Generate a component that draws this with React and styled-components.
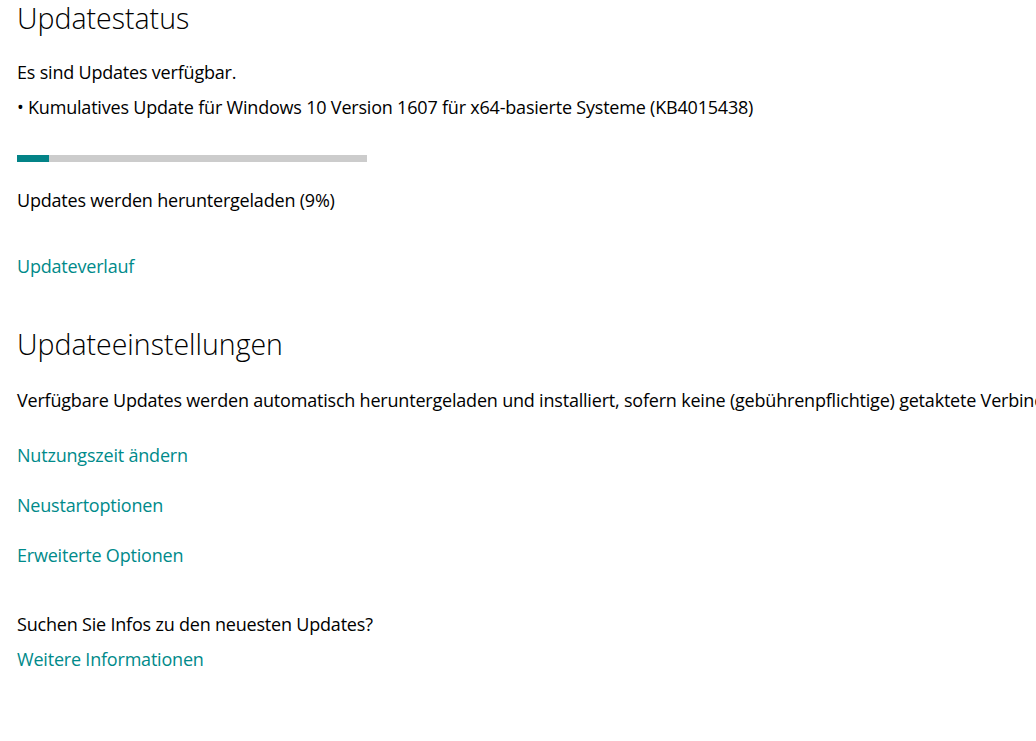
import React from "react";
import styled, { createGlobalStyle } from "styled-components";

const GlobalStyle = createGlobalStyle`
  html, body {
    margin: 0;
    padding: 0;
    background: #ffffff;
  }
  body {
    font-family: "Open Sans", "Noto Sans", sans-serif;
    color: #000000;
    overflow: hidden;
  }
`;

const Page = styled.main`
  width: 1036px;
  height: 741px;
  padding: 0 0 0 17px;
  box-sizing: border-box;
  overflow: hidden;
  white-space: nowrap;
`;

const Section = styled.section`
  display: flex;
  flex-direction: column;
  align-items: flex-start;
  margin-top: ${(p) => p.$top || 0}px;
`;

const Heading = styled.h2`
  font-size: 28.5px;
  font-weight: 300;
  line-height: 36px;
  margin: 0;
`;

const Text = styled.p`
  font-size: 18px;
  line-height: 24px;
  margin: ${(p) => p.$top || 0}px 0 0 0;
  letter-spacing: -0.2px;
`;

const Link = styled.a`
  font-size: 18px;
  line-height: 24px;
  margin-top: ${(p) => p.$top || 0}px;
  color: #008a8a;
  text-decoration: none;
  letter-spacing: -0.2px;
  cursor: pointer;
`;

const Track = styled.div`
  width: 350px;
  height: 7px;
  background: #cccccc;
  margin-top: 36px;
`;

const Fill = styled.div`
  height: 100%;
  background: #038387;
`;

const updateLinks = ["Nutzungszeit ändern", "Neustartoptionen", "Erweiterte Optionen"];

const App = () => {
  const progress = 9;

  return (
    <>
      <GlobalStyle />
      <Page>
        <Section>
          <Heading>Updatestatus</Heading>
          <Text $top={24}>Es sind Updates verfügbar.</Text>
          <Text $top={11}>
            • Kumulatives Update für Windows 10 Version 1607 für x64-basierte Systeme (KB4015438)
          </Text>
          <Track>
            <Fill style={{ width: `${Math.max(progress, 9.2)}%` }} />
          </Track>
          <Text $top={26}>Updates werden heruntergeladen ({progress}%)</Text>
          <Link $top={42}>Updateverlauf</Link>
        </Section>

        <Section $top={48}>
          <Heading>Updateeinstellungen</Heading>
          <Text $top={26}>
            Verfügbare Updates werden automatisch heruntergeladen und installiert, sofern keine (gebührenpflichtige) getaktete Verbindung verwendet wird.
          </Text>
          {updateLinks.map((label, i) => (
            <Link key={label} $top={i === 0 ? 31 : 26}>
              {label}
            </Link>
          ))}
          <Text $top={45}>Suchen Sie Infos zu den neuesten Updates?</Text>
          <Link $top={11}>Weitere Informationen</Link>
        </Section>
      </Page>
    </>
  );
};

export default App;
